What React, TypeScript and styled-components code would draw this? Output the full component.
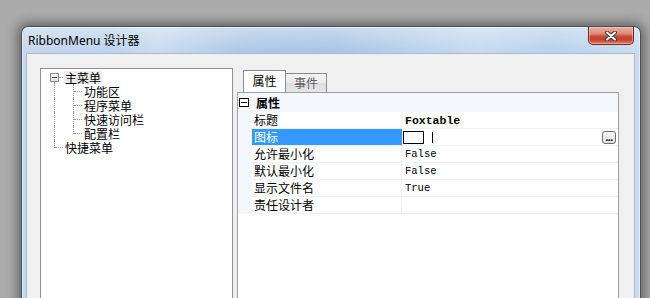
import React from 'react'
import styled, { createGlobalStyle } from 'styled-components'

const GlobalStyle = createGlobalStyle`
  html, body {
    margin: 0;
    padding: 0;
    height: 298px;
    overflow: hidden;
    background: #ababab;
  }
  body {
    font-family: "Noto Sans CJK SC", sans-serif;
    font-size: 12px;
    color: #000;
  }
`

const Desktop = styled.div`
  height: 298px;
  box-sizing: border-box;
  padding: 26px 0 0 21px;
  overflow: hidden;
`

const Window = styled.div`
  width: 620px;
  height: 290px;
  box-sizing: border-box;
  border: 1px solid #48505a;
  border-bottom: none;
  border-radius: 7px 7px 0 0;
  padding: 0 5px 0 4px;
  display: flex;
  flex-direction: column;
  background:
    linear-gradient(180deg, rgba(255, 255, 255, 0.35) 0, rgba(255, 255, 255, 0) 24px),
    linear-gradient(90deg, #c4d7ed 0%, #bdd3ec 14%, #c9dbef 22%, #aec8e6 36%, #a9c5e5 50%, #b8d0ea 62%, #c7daef 74%, #b9d1eb 86%, #c9dcf0 100%);
  box-shadow: 0 0 12px 3px rgba(0, 0, 0, 0.45), inset 0 0 0 1px rgba(255, 255, 255, 0.45);
`

const TitleBar = styled.div`
  height: 26px;
  display: flex;
  align-items: flex-start;
  justify-content: space-between;
  padding-left: 2px;
  flex: none;
`

const Title = styled.span`
  margin-top: 6px;
  font-family: "Noto Sans", "Noto Sans CJK SC", sans-serif;
  font-size: 12px;
  line-height: 16px;
  color: #000;
`

const CloseButton = styled.div`
  width: 46px;
  height: 18px;
  box-sizing: border-box;
  margin-right: 1px;
  border: 1px solid #6e2b21;
  border-top: none;
  border-radius: 0 0 5px 5px;
  display: flex;
  align-items: center;
  justify-content: center;
  background: linear-gradient(180deg, #eab0a4 0%, #dc8a78 40%, #c94a33 55%, #c4432d 75%, #de7f68 100%);
  box-shadow: inset 0 0 0 1px rgba(255, 210, 200, 0.5);
`

const Client = styled.div`
  flex: 1;
  display: flex;
  align-items: flex-start;
  padding: 14px 15px 0 13px;
  background: #f0f0f0;
  border: 1px solid #a9bbd0;
  border-bottom: none;
`

const TreePanel = styled.div`
  width: 193px;
  height: 260px;
  flex: none;
  box-sizing: border-box;
  border: 1px solid #8e9196;
  background: #fff;
  padding: 1px 0 0 3px;
`

const TreeRow = styled.div`
  display: flex;
  align-items: center;
  height: 14px;
`

type Guide = 'root' | 'pipe' | 'tee' | 'ell'

const GuideCell = styled.span<{ $kind: Guide }>`
  position: relative;
  flex: none;
  width: 19px;
  height: 14px;

  &::before {
    content: '';
    position: absolute;
    left: 10px;
    top: ${p => (p.$kind === 'root' ? '12px' : '0')};
    height: ${p => (p.$kind === 'ell' ? '8px' : p.$kind === 'root' ? '2px' : '14px')};
    border-left: 1px dotted #9a9a9a;
  }

  &::after {
    content: '';
    display: ${p => (p.$kind === 'pipe' ? 'none' : 'block')};
    position: absolute;
    left: ${p => (p.$kind === 'root' ? '15px' : '11px')};
    right: 0;
    top: 7px;
    border-top: 1px dotted #9a9a9a;
  }
`

const Expander = styled.span`
  position: absolute;
  left: 6px;
  top: 3px;
  width: 9px;
  height: 9px;
  box-sizing: border-box;
  border: 1px solid #919191;
  background: linear-gradient(180deg, #ffffff, #dcdcdc);
  z-index: 1;

  &::after {
    content: '';
    position: absolute;
    left: 1px;
    top: 3px;
    width: 5px;
    height: 1px;
    background: #2b4a7e;
  }
`

const TreeLabel = styled.span<{ $selected?: boolean }>`
  margin-left: 1px;
  padding: 0 1px;
  line-height: 13px;
  white-space: nowrap;
  background: ${p => (p.$selected ? '#ececec' : 'transparent')};
`

const RightColumn = styled.div`
  width: 382px;
  margin-left: 4px;
  padding-top: 2px;
  display: flex;
  flex-direction: column;
  flex: none;
`

const TabStrip = styled.div`
  display: flex;
  align-items: flex-end;
  height: 22px;
  padding-left: 6px;
`

const Tab = styled.div<{ $active?: boolean }>`
  box-sizing: border-box;
  width: ${p => (p.$active ? '43px' : '42px')};
  height: ${p => (p.$active ? '22px' : '19px')};
  margin-left: ${p => (p.$active ? '0' : '-1px')};
  border: 1px solid #898c95;
  border-bottom: none;
  text-align: center;
  line-height: ${p => (p.$active ? '17px' : '16px')};
  padding-top: 1px;
  color: ${p => (p.$active ? '#000' : '#5a5a5a')};
  background: ${p => (p.$active ? '#fff' : 'linear-gradient(180deg, #f3f3f3 0%, #ebebeb 50%, #dddddd 51%, #e6e6e6 100%)')};
  position: relative;
  z-index: ${p => (p.$active ? 1 : 0)};
`

const PropertyGrid = styled.div`
  height: 220px;
  box-sizing: border-box;
  border: 1px solid #a0a0a0;
  background: #fff;
`

const CategoryRow = styled.div`
  display: grid;
  grid-template-columns: 14px 1fr;
  height: 19px;
  background: #f4f7fc;
`

const CategoryToggle = styled.span`
  position: relative;
  width: 10px;
  height: 9px;
  box-sizing: border-box;
  margin: 5px 0 0 1px;
  border: 1px solid #000;
  background: #fff;

  &::after {
    content: '';
    position: absolute;
    left: 1px;
    top: 3px;
    width: 6px;
    height: 1px;
    background: #000;
  }
`

const CategoryName = styled.span`
  padding-left: 4px;
  font-weight: bold;
  line-height: 19px;
`

const PropRow = styled.div`
  display: grid;
  grid-template-columns: 14px 149px 1fr;
  height: 17px;
`

const MarginCell = styled.span`
  background: #f4f7fc;
`

const LabelCell = styled.span<{ $selected?: boolean }>`
  box-sizing: border-box;
  padding-left: 2px;
  line-height: 16px;
  border-bottom: 1px solid #eef1f6;
  white-space: nowrap;
  background: ${p => (p.$selected ? '#3399ff' : '#fff')};
  color: ${p => (p.$selected ? '#fff' : '#000')};
`

const ValueCell = styled.span<{ $selected?: boolean }>`
  box-sizing: border-box;
  display: flex;
  align-items: center;
  padding: 0 2px 0 3px;
  border-left: 1px solid ${p => (p.$selected ? '#3399ff' : '#eef1f6')};
  border-bottom: 1px solid #eef1f6;
  font-family: "Liberation Mono", monospace;
  font-size: 10px;
`

const ValueText = styled.span<{ $bold?: boolean }>`
  font-weight: ${p => (p.$bold ? 'bold' : 'normal')};
  font-size: ${p => (p.$bold ? '11.5px' : '10.5px')};
`

const ImageSwatch = styled.span`
  width: 21px;
  height: 13px;
  box-sizing: border-box;
  margin-left: -2px;
  border: 1px solid #000;
  background: #fff;
  flex: none;
`

const Caret = styled.span`
  width: 1px;
  height: 11px;
  margin-left: 8px;
  background: #000;
  flex: none;
`

const EllipsisButton = styled.span`
  margin-left: auto;
  width: 14px;
  height: 13px;
  box-sizing: border-box;
  border: 1px solid #707070;
  border-radius: 3px;
  background: linear-gradient(180deg, #f6f6f6, #dedede);
  font-family: "Liberation Sans", sans-serif;
  font-size: 10px;
  font-weight: bold;
  line-height: 12px;
  text-align: center;
  letter-spacing: -0.5px;
  color: #000;
`

type TreeItem = { guides: Guide[]; label: string; selected?: boolean; expander?: boolean }

const treeItems: TreeItem[] = [
  { guides: ['root'], label: '主菜单', selected: true, expander: true },
  { guides: ['pipe', 'tee'], label: '功能区' },
  { guides: ['pipe', 'tee'], label: '程序菜单' },
  { guides: ['pipe', 'tee'], label: '快速访问栏' },
  { guides: ['pipe', 'ell'], label: '配置栏' },
  { guides: ['ell'], label: '快捷菜单' },
]

type Prop = { name: string; value?: string; bold?: boolean; image?: boolean }

const props: Prop[] = [
  { name: '标题', value: 'Foxtable', bold: true },
  { name: '图标', image: true },
  { name: '允许最小化', value: 'False' },
  { name: '默认最小化', value: 'False' },
  { name: '显示文件名', value: 'True' },
  { name: '责任设计者' },
]

const CloseGlyph = () => (
  <svg width="14" height="10" viewBox="0 0 14 10">
    <path d="M3 1.5 L11 8.5 M11 1.5 L3 8.5" stroke="#3a3a3a" strokeWidth="4" strokeLinecap="round" />
    <path d="M3 1.5 L11 8.5 M11 1.5 L3 8.5" stroke="#ffffff" strokeWidth="2" strokeLinecap="round" />
  </svg>
)

export default function App() {
  return (
    <>
      <GlobalStyle />
      <Desktop>
        <Window>
          <TitleBar>
            <Title>RibbonMenu 设计器</Title>
            <CloseButton>
              <CloseGlyph />
            </CloseButton>
          </TitleBar>
          <Client>
            <TreePanel>
              {treeItems.map(item => (
                <TreeRow key={item.label}>
                  {item.guides.map((g, i) => (
                    <GuideCell key={i} $kind={g}>
                      {item.expander && <Expander />}
                    </GuideCell>
                  ))}
                  <TreeLabel $selected={item.selected}>{item.label}</TreeLabel>
                </TreeRow>
              ))}
            </TreePanel>
            <RightColumn>
              <TabStrip>
                <Tab $active>属性</Tab>
                <Tab>事件</Tab>
              </TabStrip>
              <PropertyGrid>
                <CategoryRow>
                  <CategoryToggle />
                  <CategoryName>属性</CategoryName>
                </CategoryRow>
                {props.map(p => (
                  <PropRow key={p.name}>
                    <MarginCell />
                    <LabelCell $selected={p.image}>{p.name}</LabelCell>
                    <ValueCell $selected={p.image}>
                      {p.image ? (
                        <>
                          <ImageSwatch />
                          <Caret />
                          <EllipsisButton>...</EllipsisButton>
                        </>
                      ) : (
                        p.value && <ValueText $bold={p.bold}>{p.value}</ValueText>
                      )}
                    </ValueCell>
                  </PropRow>
                ))}
              </PropertyGrid>
            </RightColumn>
          </Client>
        </Window>
      </Desktop>
    </>
  )
}
